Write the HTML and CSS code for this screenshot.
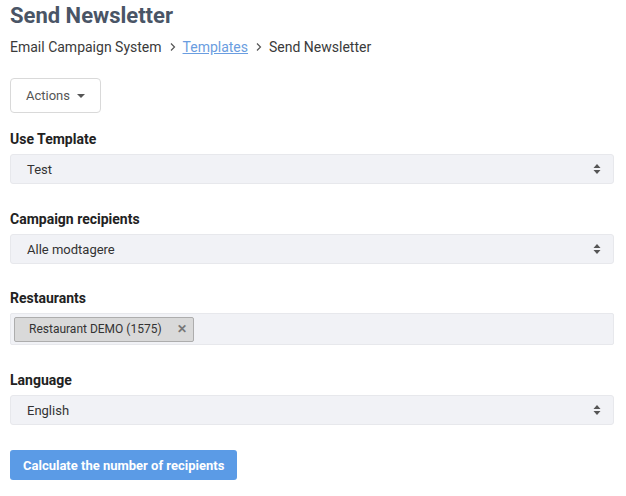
FILE: index.html
```html
<!DOCTYPE html>
<html>
<head>
<meta charset="utf-8">
<link rel="stylesheet" href="styles.css">
</head>
<body>
<div class="page">
  <h1 class="title">Send Newsletter</h1>
  <nav class="crumbs">
    <span>Email Campaign System</span>
    <svg class="sep" width="8" height="10" viewBox="0 0 8 10"><path d="M2 1.5 L5.5 5 L2 8.5" fill="none" stroke="#555" stroke-width="1.2"/></svg>
    <a href="#" class="link">Templates</a>
    <svg class="sep" width="8" height="10" viewBox="0 0 8 10"><path d="M2 1.5 L5.5 5 L2 8.5" fill="none" stroke="#555" stroke-width="1.2"/></svg>
    <span>Send Newsletter</span>
  </nav>
  <div class="actions-row">
    <button class="btn-actions">Actions <span class="caret"></span></button>
  </div>

  <div class="field">
    <label class="label">Use Template</label>
    <div class="select"><span>Test</span><svg class="arrows" width="8" height="12" viewBox="0 0 8 12"><path d="M4 1 L7.5 5 L0.5 5 Z M4 11 L7.5 7 L0.5 7 Z" fill="#555"/></svg></div>
  </div>

  <div class="field">
    <label class="label">Campaign recipients</label>
    <div class="select"><span>Alle modtagere</span><svg class="arrows" width="8" height="12" viewBox="0 0 8 12"><path d="M4 1 L7.5 5 L0.5 5 Z M4 11 L7.5 7 L0.5 7 Z" fill="#555"/></svg></div>
  </div>

  <div class="field field-tags">
    <label class="label">Restaurants</label>
    <div class="multi"><span class="chip">Restaurant DEMO (1575)<span class="x">✕</span></span></div>
  </div>

  <div class="field">
    <label class="label">Language</label>
    <div class="select"><span>English</span><svg class="arrows" width="8" height="12" viewBox="0 0 8 12"><path d="M4 1 L7.5 5 L0.5 5 Z M4 11 L7.5 7 L0.5 7 Z" fill="#555"/></svg></div>
  </div>

  <button class="btn-primary">Calculate the number of recipients</button>
</div>
</body>
</html>
```
FILE: styles.css
```css
* { box-sizing: border-box; }
html, body { margin: 0; padding: 0; background: #fff; }
body { font-family: Roboto, "Liberation Sans", Arial, sans-serif; color: #333; }
.page { padding: 3px 12px 0 10px; }
.title {
  margin: 0;
  font-size: 22px;
  font-weight: 700;
  color: #4a5566;
  line-height: 26px;
}
.crumbs {
  display: flex;
  align-items: center;
  margin-top: 8px;
  font-size: 14px;
  color: #3a3a3a;
  line-height: 20px;
}
.crumbs .sep { margin: 0 6px 0 7px; }
.link { color: #6a9de0; text-decoration: underline; }
.actions-row { margin-top: 21px; }
.btn-actions {
  display: inline-flex;
  align-items: center;
  gap: 7px;
  height: 35px;
  padding: 0 15px;
  background: #fff;
  border: 1px solid #d9d9d9;
  border-radius: 4px;
  font-family: inherit;
  font-size: 13px;
  color: #555;
}
.caret {
  width: 0; height: 0;
  border-left: 4px solid transparent;
  border-right: 4px solid transparent;
  border-top: 4px solid #555;
}
.field { margin-top: 17px; }
.field + .field { margin-top: 26px; }
.field + .field-tags { margin-top: 25px; }
.label {
  display: block;
  font-size: 14px;
  font-weight: 700;
  color: #222;
  line-height: 18px;
  margin-bottom: 6px;
}
.select {
  display: flex;
  align-items: center;
  justify-content: space-between;
  height: 30px;
  padding: 0 12px 0 16px;
  background: #f1f2f6;
  border: 1px solid #e7e8ec;
  border-radius: 3px;
  font-size: 13px;
  color: #333;
}
.multi {
  display: flex;
  align-items: center;
  height: 32px;
  padding: 0 3px;
  background: #f1f2f6;
  border: 1px solid #e7e8ec;
  border-radius: 2px;
}
.chip {
  display: inline-flex;
  align-items: center;
  height: 25px;
  padding: 0 6px 0 14px;
  background: #d9d9d9;
  border: 1px solid #adadad;
  border-radius: 2px;
  font-size: 12px;
  color: #333;
}
.chip .x {
  margin-left: 15px;
  font-size: 12px;
  font-weight: 700;
  color: #777;
}
.btn-primary {
  display: block;
  margin-top: 25px;
  height: 30px;
  padding: 0 13px;
  background: #5b9be6;
  border: none;
  border-radius: 3px;
  font-family: inherit;
  font-size: 13px;
  font-weight: 700;
  color: #fff;
}
```
